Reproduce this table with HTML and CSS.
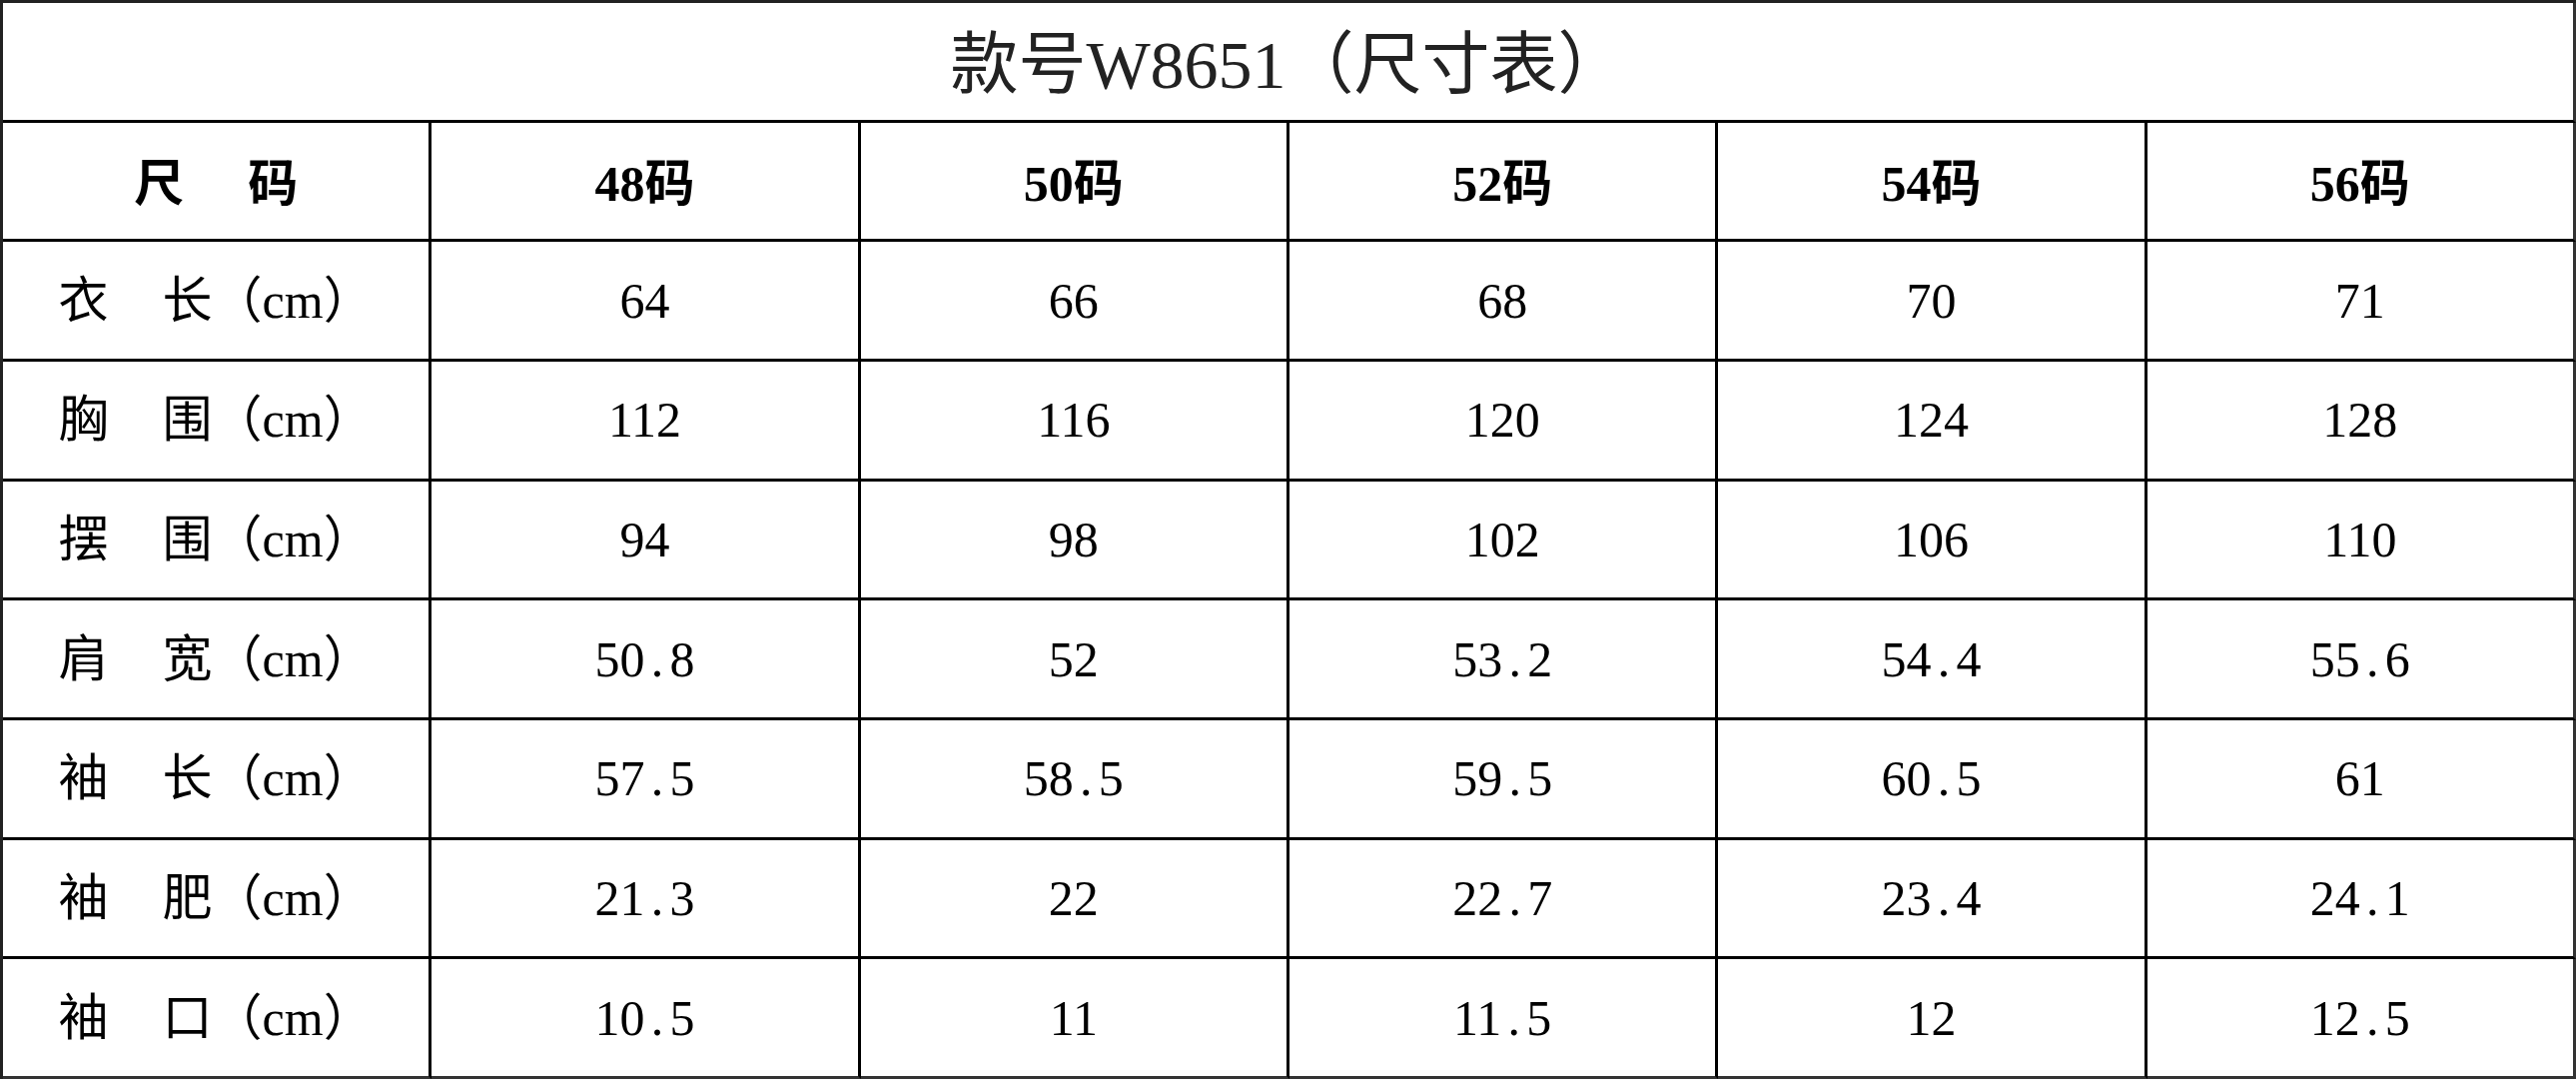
FILE: index.html
```html
<!DOCTYPE html>
<html lang="zh-CN">
<head>
<meta charset="utf-8">
<title>款号W8651（尺寸表）</title>
<link rel="stylesheet" href="styles.css">
</head>
<body>
<table class="size-table">
  <tr class="title-row">
    <th colspan="6" class="title">款号W8651（尺寸表）</th>
  </tr>
  <tr class="head-row">
    <th>尺<span class="gap-head"></span>码</th>
    <th>48码</th>
    <th>50码</th>
    <th>52码</th>
    <th>54码</th>
    <th>56码</th>
  </tr>
  <tr>
    <td class="label">衣<span class="gap"></span>长（cm）</td>
    <td>64</td><td>66</td><td>68</td><td>70</td><td>71</td>
  </tr>
  <tr>
    <td class="label">胸<span class="gap"></span>围（cm）</td>
    <td>112</td><td>116</td><td>120</td><td>124</td><td>128</td>
  </tr>
  <tr>
    <td class="label">摆<span class="gap"></span>围（cm）</td>
    <td>94</td><td>98</td><td>102</td><td>106</td><td>110</td>
  </tr>
  <tr>
    <td class="label">肩<span class="gap"></span>宽（cm）</td>
    <td>50<span class="pt">.</span>8</td><td>52</td><td>53<span class="pt">.</span>2</td><td>54<span class="pt">.</span>4</td><td>55<span class="pt">.</span>6</td>
  </tr>
  <tr>
    <td class="label">袖<span class="gap"></span>长（cm）</td>
    <td>57<span class="pt">.</span>5</td><td>58<span class="pt">.</span>5</td><td>59<span class="pt">.</span>5</td><td>60<span class="pt">.</span>5</td><td>61</td>
  </tr>
  <tr>
    <td class="label">袖<span class="gap"></span>肥（cm）</td>
    <td>21<span class="pt">.</span>3</td><td>22</td><td>22<span class="pt">.</span>7</td><td>23<span class="pt">.</span>4</td><td>24<span class="pt">.</span>1</td>
  </tr>
  <tr>
    <td class="label">袖<span class="gap"></span>口（cm）</td>
    <td>10<span class="pt">.</span>5</td><td>11</td><td>11<span class="pt">.</span>5</td><td>12</td><td>12<span class="pt">.</span>5</td>
  </tr>
</table>
</body>
</html>
```
FILE: styles.css
```css
html, body {
  margin: 0;
  padding: 0;
  background: #ffffff;
}

body {
  width: 2579px;
  height: 1080px;
  overflow: hidden;
  font-family: "Liberation Serif", "Noto Sans CJK SC", serif;
  color: #000;
}

.size-table {
  width: 2579px;
  height: 1080px;
  table-layout: fixed;
  border-collapse: separate;
  border-spacing: 0;
  border-top: 3px solid #222;
  border-left: 3px solid #222;
}

.size-table tr {
  height: 119px;
}

.size-table th,
.size-table td {
  border-right: 3px solid #000;
  border-bottom: 3px solid #000;
  padding: 0;
  text-align: center;
  vertical-align: middle;
  font-size: 50px;
  line-height: 1;
  white-space: nowrap;
}

.size-table tr > :last-child {
  border-right-color: #333;
}

.size-table tr:last-child > * {
  border-bottom-color: #333;
}

.title {
  font-size: 68px !important;
  font-weight: 400;
  color: #222;
  padding-top: 8px !important;
}

.head-row th {
  font-weight: 700;
  padding-top: 6px;
}

.gap {
  display: inline-block;
  width: 54px;
}

.gap-head {
  display: inline-block;
  width: 64px;
}

.pt {
  display: inline-block;
  width: 0.5em;
  text-align: center;
}
```
